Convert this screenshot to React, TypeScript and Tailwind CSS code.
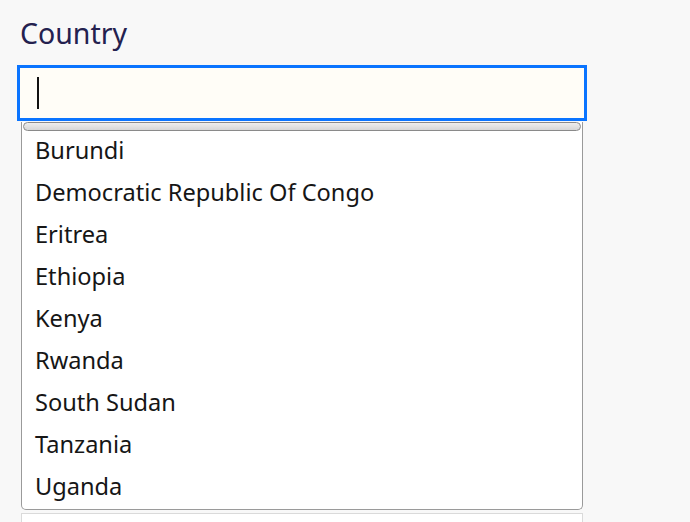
const countries = [
  "Burundi",
  "Democratic Republic Of Congo",
  "Eritrea",
  "Ethiopia",
  "Kenya",
  "Rwanda",
  "South Sudan",
  "Tanzania",
  "Uganda",
];

export default function App() {
  return (
    <div className="min-h-[522px] h-[522px] overflow-hidden bg-[#f8f8f8] font-['Noto_Sans',sans-serif]">
      <div className="ml-[17px] w-[570px] pt-[14px]">
        {/* label */}
        <label className="block ml-[3px] text-[28.5px] leading-[38px] text-[#24214f]">
          Country
        </label>
        {/* focused input */}
        <div className="mt-[13px] h-[56px] border-[3px] border-[#0a74ff] bg-[#fffdf7] flex items-center px-[17px]">
          <div className="w-[2px] h-[32px] bg-[#111]" />
        </div>
        {/* autocomplete list */}
        <div className="mx-[4px] border border-t-0 border-[#9a9a9a] rounded-b-[5px] bg-white">
          <div className="mx-[1px] mt-[1px] h-[9px] rounded-full border border-[#8a8a8a] bg-gradient-to-b from-[#eeeeee] to-[#d6d6d6]" />
          <ul>
            {countries.map((c) => (
              <li
                key={c}
                className="h-[42px] flex items-center pb-[2px] pl-[13px] text-[23.6px] text-[#161616]"
              >
                {c}
              </li>
            ))}
          </ul>
        </div>
        {/* next field peeking */}
        <div className="mx-[4px] mt-[3px] h-[40px] border border-[#dadada] bg-white" />
      </div>
    </div>
  );
}
